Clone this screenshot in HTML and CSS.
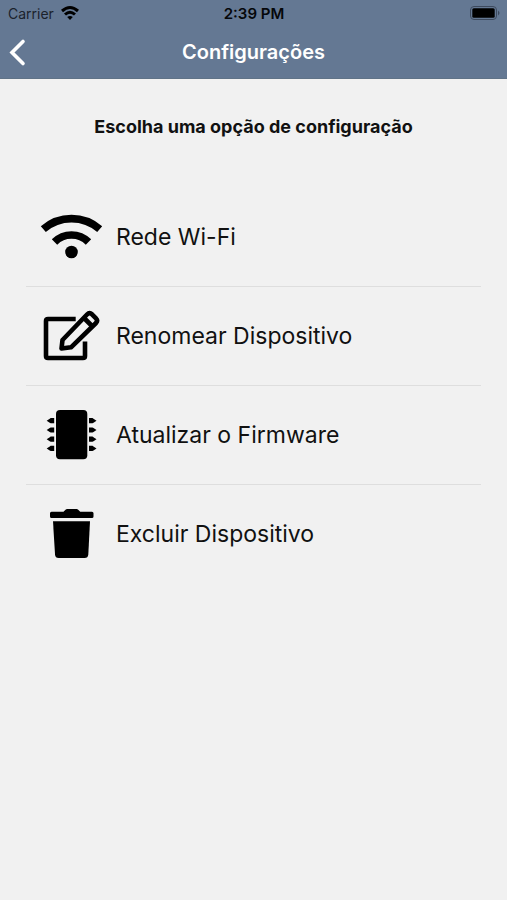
FILE: index.html
```html
<!DOCTYPE html>
<html lang="pt-BR">
<head>
<meta charset="utf-8">
<meta name="viewport" content="width=device-width, initial-scale=1">
<title>Configurações</title>
<link rel="stylesheet" href="styles.css">
</head>
<body>
<header class="header">
  <div class="status">
    <div class="carrier">
      <span>Carrier</span>
      <svg width="20" height="16" viewBox="0 0 20 16" fill="none" stroke="#000" stroke-width="3" aria-hidden="true">
        <path d="M2 6Q10-1 18 6M5 9.500Q10 5 15 9.500"/>
        <path d="M7.200 12Q10 9.800 12.800 12L10 15Z" fill="#000" stroke="none"/>
      </svg>
    </div>
    <span class="time">2:39 PM</span>
    <svg class="battery" width="30" height="16" viewBox="1 0 30 16" aria-hidden="true">
      <rect x="1.500" y="1.500" width="26" height="13" rx="3.500" fill="none" stroke="#3d4a5e"/>
      <rect x="3.300" y="3.300" width="22.400" height="9.400" rx="1.500" fill="#000"/>
      <path d="M29 5.500Q32 8 29 10.500Z" fill="#3d4a5e"/>
    </svg>
  </div>
  <div class="nav">
    <button class="back" type="button" aria-label="Voltar">
      <svg width="20" height="30" viewBox="0 0 20 30" fill="none" stroke="#fff" stroke-width="3.600" stroke-linecap="round" stroke-linejoin="miter" aria-hidden="true"><path d="M15 4.500L4 15.500L15 26.500"/></svg>
    </button>
    <h1 class="title">Configurações</h1>
  </div>
</header>
<main class="content">
  <h2 class="prompt">Escolha uma opção de configuração</h2>
  <ul class="options">
    <li class="item">
      <button class="option" type="button">
        <svg class="icon" viewBox="0 0 64 64" fill="none" stroke="#000" stroke-width="7.600" aria-hidden="true">
          <path d="M3.300 24.200A43 43 0 0 1 59.700 24.200M14.500 37A24 24 0 0 1 48.500 37"/>
          <circle cx="31.500" cy="47" r="6.300" fill="#000" stroke="none"/>
        </svg>
        <span>Rede Wi-Fi</span>
      </button>
    </li>
    <li class="item">
      <button class="option" type="button">
        <svg class="icon" viewBox="0 0 64 64" fill="none" stroke="#000" stroke-width="4.600" stroke-linejoin="round" aria-hidden="true">
          <path d="M35.700 15H8Q6 15 6 17V52Q6 54 8 54H43Q45 54 45 52V37.500"/>
          <path d="M21.500 44.500L22.500 36L47 10.500Q49.500 8 52 10.300L56 14.300Q58.200 16.500 56 19L31 43.300Z"/>
          <path d="M44 14L53 23"/>
        </svg>
        <span>Renomear Dispositivo</span>
      </button>
    </li>
    <li class="item">
      <button class="option" type="button">
        <svg class="icon" viewBox="0 0 64 64" aria-hidden="true">
          <defs>
            <path id="pin" d="M0 0L3-2L4-2.600H7.500V2.600H4L3 2Z"/>
            <g id="pins">
              <use href="#pin" y="17.700"/><use href="#pin" y="27"/><use href="#pin" y="36.200"/><use href="#pin" y="45.400"/>
            </g>
          </defs>
          <rect x="16" y="7" width="31.300" height="49.300" rx="4"/>
          <use href="#pins" x="6.700"/>
          <use href="#pins" transform="translate(56.500 0) scale(-1 1)"/>
        </svg>
        <span>Atualizar o Firmware</span>
      </button>
    </li>
    <li class="item">
      <button class="option" type="button">
        <svg class="icon" viewBox="0 0 64 64" aria-hidden="true">
          <path d="M11.500 9.700H23.500L25.500 7.700Q26.200 7 27.200 7H36.500Q37.500 7 38.200 7.700L40.200 9.700H52Q53.500 9.700 53.500 11.200V14.500Q53.500 16 52 16H11.500Q10 16 10 14.500V11.200Q10 9.700 11.500 9.700Z"/>
          <path d="M13 19.300H50L48.300 52.500Q48 56 44.500 56H18.700Q15.300 56 15 52.500Z"/>
        </svg>
        <span>Excluir Dispositivo</span>
      </button>
    </li>
  </ul>
</main>
</body>
</html>
```
FILE: styles.css
```css
* {
  box-sizing: border-box;
}

body {
  margin: 0;
  min-height: 100vh;
  background: #f1f1f1;
  color: #111;
  font-family: Inter, "Liberation Sans", sans-serif;
}

button {
  padding: 0;
  border: 0;
  background: none;
  color: inherit;
  font: inherit;
  text-align: left;
  cursor: pointer;
}

svg {
  display: block;
}

.header {
  background: #647893;
  border-bottom: 1px solid #607387;
}

.status {
  display: grid;
  grid-template-columns: 1fr auto 1fr;
  align-items: center;
  height: 26px;
  padding: 0 7px 0 8px;
  font-size: 14px;
  color: #1b222c;
}

.carrier {
  display: flex;
  align-items: center;
  gap: 6px;
}

.time {
  color: #05070a;
  font-size: 15px;
  font-weight: 600;
}

.battery {
  justify-self: end;
}

.nav {
  display: grid;
  grid-template-columns: 1fr auto 1fr;
  align-items: center;
  height: 52px;
  padding: 0 8px;
}

.back {
  justify-self: start;
}

.title {
  margin: 0;
  color: #fff;
  font-size: 20px;
  font-weight: 600;
}

.content {
  padding: 36px 26px;
}

.prompt {
  margin: 0 0 49px;
  font-size: 18px;
  line-height: 24px;
  font-weight: 700;
  text-align: center;
}

.options {
  margin: 0;
  padding: 0;
  list-style: none;
}

.item + .item {
  border-top: 1px solid #dedede;
}

.option {
  display: flex;
  align-items: center;
  gap: 12px;
  width: 100%;
  height: 98px;
  padding-left: 14px;
  font-size: 23px;
}

.icon {
  flex: none;
  width: 64px;
  height: 64px;
}
```
